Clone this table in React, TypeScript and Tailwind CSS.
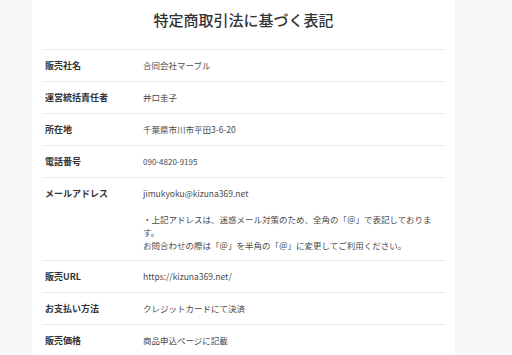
import React from "react";

const rows: { label: string; value: React.ReactNode; small?: boolean; tight?: boolean }[] = [
  { label: "販売社名", value: "合同会社マーブル" },
  { label: "運営統括責任者", value: "井口圭子" },
  { label: "所在地", value: "千葉県市川市平田3-6-20" },
  { label: "電話番号", value: "090-4820-9195", small: true },
  {
    label: "メールアドレス",
    tight: true,
    value: (
      <>
        jimukyoku@kizuna369.net
        <br />
        <br />
        ・上記アドレスは、迷惑メール対策のため、全角の「＠」で表記しております。
        <br />
        お問合わせの際は「＠」を半角の「＠」に変更してご利用ください。
      </>
    ),
  },
  { label: "販売URL", value: "https://kizuna369.net/" },
  { label: "お支払い方法", value: "クレジットカードにて決済" },
  { label: "販売価格", value: "商品申込ページに記載" },
];

export default function App() {
  return (
    <div
      className="w-[512px] h-[355px] overflow-hidden bg-[#f6f7f9] pl-[32px]"
      style={{ fontFamily: '"Noto Sans CJK JP", "Noto Sans", sans-serif' }}
    >
      <div className="w-[423px] h-full bg-white px-[10px]">
        <h1 className="pt-[10px] h-[49px] text-center text-[15px] leading-[20px] font-medium text-[#333]">
          特定商取引法に基づく表記
        </h1>
        <div className="border-t border-[#ebebeb]">
          {rows.map((r) => (
            <div
              key={r.label}
              className={`flex border-b border-[#ebebeb] ${r.tight ? "pt-[9px] pb-[8px]" : "py-[9px]"}`}
            >
              <div className="w-[101px] shrink-0 pl-[3px] text-[9px] leading-[13px] font-bold text-[#333]">
                {r.label}
              </div>
              <div
                className={`flex-1 pr-[10px] leading-[13px] text-[#4a4a4a] ${
                  r.small ? "text-[8px]" : "text-[8.5px]"
                }`}
              >
                {r.value}
              </div>
            </div>
          ))}
        </div>
      </div>
    </div>
  );
}
